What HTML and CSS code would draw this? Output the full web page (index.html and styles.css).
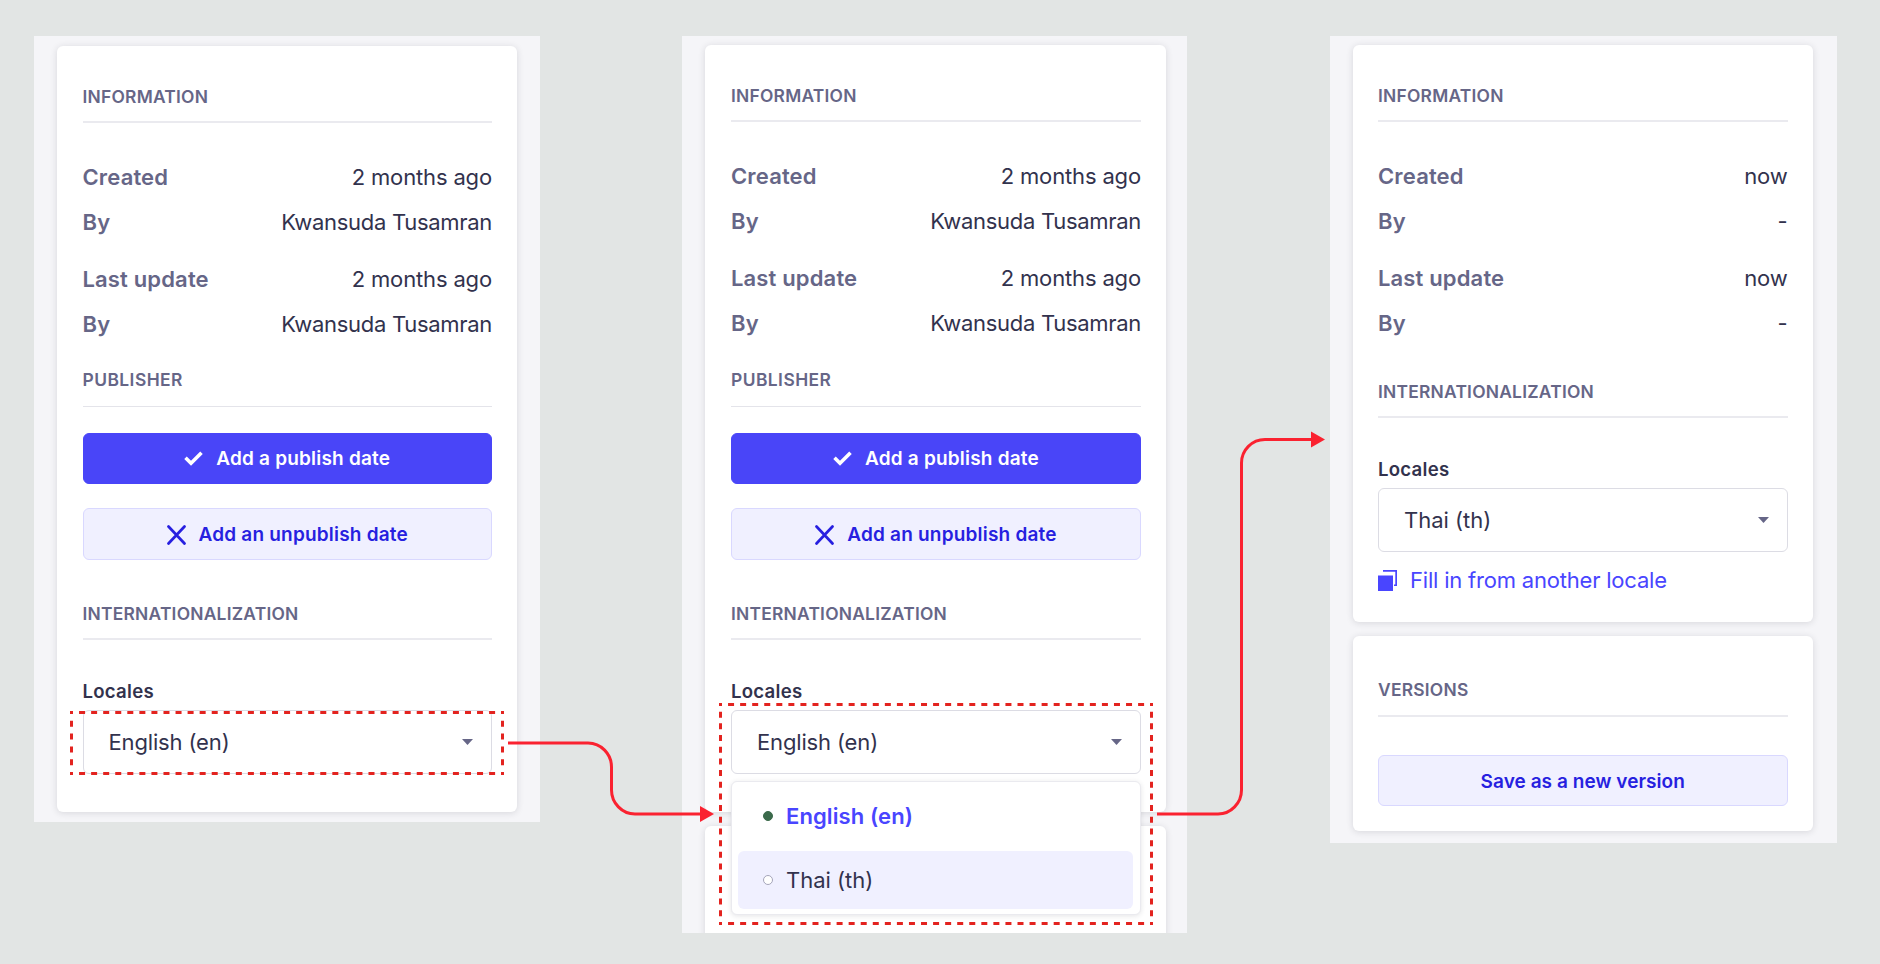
FILE: index.html
```html
<!DOCTYPE html>
<html lang="en">
<head>
<meta charset="utf-8">
<title>Locales</title>
<link rel="stylesheet" href="styles.css">
</head>
<body>
<main class="board">
  <section class="panel panel-a">
    <article class="card">
      <h2 class="heading">Information</h2>
      <dl class="facts">
        <div class="row"><dt>Created</dt><dd>2 months ago</dd></div>
        <div class="row"><dt>By</dt><dd class="name">Kwansuda Tusamran</dd></div>
        <div class="row spaced"><dt>Last update</dt><dd>2 months ago</dd></div>
        <div class="row"><dt>By</dt><dd class="name">Kwansuda Tusamran</dd></div>
      </dl>
      <h2 class="heading publisher">Publisher</h2>
      <button class="btn primary"><svg class="check" viewBox="0 0 19 15"><path d="M1.500 6.800 7 12.200 17.500 1.800"/></svg>Add a publish date</button>
      <button class="btn secondary"><svg class="cross" viewBox="0 0 19 20"><path d="M1.500 1.500 17.500 18.500M17.500 1.500 1.500 18.500"/></svg>Add an unpublish date</button>
      <h2 class="heading intl">Internationalization</h2>
      <label class="label">Locales</label>
      <div class="select"><span>English (en)</span><svg class="caret" viewBox="0 0 11 6"><path d="M0 0h11L5.500 6z"/></svg><div class="marker"><svg width="434" height="64"><path d="M0 1.500h434M0 62.500h434" stroke-dasharray="6 6.060" stroke-dashoffset="3"/><path d="M1.500 0v64M432.500 0v64" stroke-dasharray="6 6.800" stroke-dashoffset="3"/></svg></div></div>
    </article>
  </section>

  <section class="panel panel-b">
    <article class="card">
      <h2 class="heading">Information</h2>
      <dl class="facts">
        <div class="row"><dt>Created</dt><dd>2 months ago</dd></div>
        <div class="row"><dt>By</dt><dd class="name">Kwansuda Tusamran</dd></div>
        <div class="row spaced"><dt>Last update</dt><dd>2 months ago</dd></div>
        <div class="row"><dt>By</dt><dd class="name">Kwansuda Tusamran</dd></div>
      </dl>
      <h2 class="heading publisher">Publisher</h2>
      <button class="btn primary"><svg class="check" viewBox="0 0 19 15"><path d="M1.500 6.800 7 12.200 17.500 1.800"/></svg>Add a publish date</button>
      <button class="btn secondary"><svg class="cross" viewBox="0 0 19 20"><path d="M1.500 1.500 17.500 18.500M17.500 1.500 1.500 18.500"/></svg>Add an unpublish date</button>
      <h2 class="heading intl">Internationalization</h2>
      <label class="label">Locales</label>
      <div class="select"><span>English (en)</span><svg class="caret" viewBox="0 0 11 6"><path d="M0 0h11L5.500 6z"/></svg>
        <div class="menu">
          <div class="option chosen"><i class="dot full"></i>English (en)</div>
          <div class="option hover"><i class="dot"></i>Thai (th)</div>
        </div>
        <div class="marker"><svg width="434" height="222"><path d="M0 1.500h434M0 220.500h434" stroke-dasharray="6 6.060" stroke-dashoffset="3"/><path d="M1.500 0v222M432.500 0v222" stroke-dasharray="6 5.680" stroke-dashoffset="3"/></svg></div>
      </div>
    </article>
    <article class="card next"></article>
  </section>

  <section class="panel panel-c">
    <article class="card">
      <h2 class="heading">Information</h2>
      <dl class="facts">
        <div class="row"><dt>Created</dt><dd>now</dd></div>
        <div class="row"><dt>By</dt><dd>-</dd></div>
        <div class="row spaced"><dt>Last update</dt><dd>now</dd></div>
        <div class="row"><dt>By</dt><dd>-</dd></div>
      </dl>
      <h2 class="heading intl">Internationalization</h2>
      <label class="label">Locales</label>
      <div class="select"><span class="thai">Thai (th)</span><svg class="caret" viewBox="0 0 11 6"><path d="M0 0h11L5.500 6z"/></svg></div>
      <a class="fill"><svg class="copy" viewBox="0 0 19 21"><path d="M0 5.500h15v15.500H0z"/><path d="M5 0h14v16h-3v-1.500h1.300V1.700H5z"/></svg>Fill in from another locale</a>
    </article>
    <article class="card next">
      <h2 class="heading">Versions</h2>
      <button class="btn secondary">Save as a new version</button>
    </article>
  </section>

  <svg class="arrows" viewBox="0 0 1880 964">
    <path class="line" d="M508 743H588C601 743 611.500 754 611.500 767V790C611.500 803 622 814 635 814H701"/>
    <path class="head" d="M700 806 714 814 700 822z"/>
    <path class="line" d="M1157 814H1218C1231 814 1241.500 803 1241.500 790V463C1241.500 450 1252 439.500 1265 439.500H1312"/>
    <path class="head" d="M1311 431.500 1325 439.500 1311 447.500z"/>
  </svg>
</main>
</body>
</html>
```
FILE: styles.css
```css
* { box-sizing: border-box; }
body { margin: 0; background: #e2e5e4; font-family: Inter, "Liberation Sans", sans-serif; color: #32324d; }
.board { position: relative; width: 1880px; height: 964px; overflow: hidden; display: flex; align-items: flex-start; padding: 36px 0 0 34px; }
.panel { background: #f5f5f8; overflow: hidden; flex: none; }
.panel-a { width: 506px; height: 786px; padding: 10px 23px 0 23px; }
.panel-b { width: 505px; height: 897px; margin-left: 142px; padding: 9px 21px 0 23px; }
.panel-c { width: 507px; height: 807px; margin-left: 143px; padding: 9px 24.500px 0 22.500px; }
.card { background: #fff; border-radius: 6px; box-shadow: 0 1px 7px rgba(33, 33, 52, .14); padding: 0 25px 0 25.500px; height: 766px; display: flex; flex-direction: column; }
.panel-b .card { height: 767px; padding: 0 25px 0 26px; }
.panel-c .card { height: 577px; }
.panel .card.next { margin-top: 14px; height: 195px; }

.heading { margin: 0; height: 77px; padding-top: 39.500px; border-bottom: 2px solid #eaeaef; font-size: 17.400px; line-height: 22px; font-weight: 600; letter-spacing: .24px; text-transform: uppercase; color: #666687; flex: none; }
.facts { margin: 0; padding-top: 40px; }
.row { display: flex; justify-content: space-between; height: 44.800px; font-size: 22px; line-height: 28px; }
.row.spaced { margin-top: 12.600px; }
dt { font-weight: 600; color: #666687; letter-spacing: .15px; }
dd { margin: 0; letter-spacing: -.15px; }
dd.name { letter-spacing: -.3px; }
.publisher { height: 54px; padding-top: 16px; margin-top: -1px; border-bottom-width: 1px; border-color: #e4e4ea; letter-spacing: .45px; }
.panel-a .publisher { margin-top: -2px; }
.btn { font: 600 19px/24px Inter, "Liberation Sans", sans-serif; letter-spacing: .2px; height: 51px; border-radius: 6px; border: 1px solid #d9d8ff; display: flex; align-items: center; justify-content: center; width: 100%; padding: 2px 0 0; flex: none; }
.primary { background: #4945f8; border-color: #4945f8; color: #fff; margin-top: 26px; }
.secondary { background: #f0f0ff; color: #271fe0; margin-top: 24px; height: 52px; }
.check { width: 19px; height: 15px; margin: -2px 13px 0 0; fill: none; stroke: #fff; stroke-width: 3.600; }
.cross { width: 19px; height: 20px; margin-right: 13px; fill: none; stroke: #271fe0; stroke-width: 2.700; stroke-linecap: round; }
.intl { height: 80px; padding-top: 43px; }
.panel-c .intl { height: 64.700px; padding-top: 27px; }
.label { font-size: 18.600px; line-height: 24px; font-weight: 600; letter-spacing: .25px; margin-top: 39px; height: 31px; flex: none; }
.select { position: relative; height: 64px; border: 1px solid #dcdce4; border-radius: 6px; padding: 0 18px 0 25px; display: flex; align-items: center; justify-content: space-between; font-size: 22px; letter-spacing: -.15px; flex: none; }
.thai { letter-spacing: 0; }
.caret { width: 11px; height: 6px; fill: #666687; }
.marker { position: absolute; left: -14px; top: 0; line-height: 0; }
.panel-b .marker { left: -13px; top: -8px; }
.marker path { fill: none; stroke: #e3231f; stroke-width: 3; }
.menu { position: absolute; left: -1px; right: -1px; top: 70px; height: 134px; background: #fff; border: 1px solid #eaeaef; border-radius: 6px; box-shadow: 0 1px 5px rgba(33, 33, 52, .12); padding: 5px 7px 5px 6px; }
.option { height: 58px; margin-bottom: 6px; display: flex; align-items: center; padding-left: 25px; border-radius: 6px; letter-spacing: 0; }
.chosen { color: #4945ff; font-weight: 600; letter-spacing: .1px; }
.hover { background: #f0f0ff; }
.dot { width: 10px; height: 10px; border-radius: 50%; border: 1px solid #a5a5ba; background: #fff; margin-right: 13px; }
.dot.full { background: #3b6a4b; border-color: #3b6a4b; }
.fill { display: flex; align-items: center; margin-top: 14px; color: #4945ff; font-size: 22px; line-height: 28px; letter-spacing: -.2px; }
.copy { width: 19px; height: 21px; margin-right: 13px; fill: #4945ff; }
.next .heading { height: 81px; padding-top: 43px; }
.next .secondary { margin-top: 38px; height: 51px; letter-spacing: .06px; }
.arrows { position: absolute; left: 0; top: 0; width: 1880px; height: 964px; pointer-events: none; }
.line { fill: none; stroke: #fa2230; stroke-width: 3; }
.head { fill: #fa2230; }
```
